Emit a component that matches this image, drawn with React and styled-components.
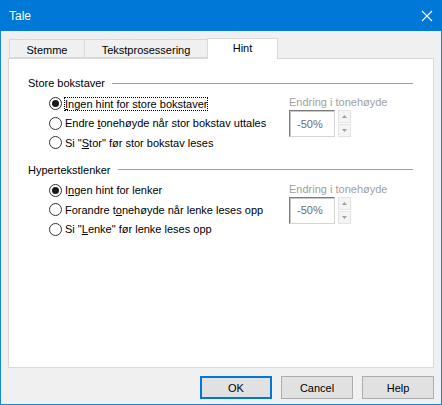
import React from "react";
import styled, { createGlobalStyle } from "styled-components";

const Global = createGlobalStyle`
  html, body {
    margin: 0;
    padding: 0;
    background: #ffffff;
  }
  body {
    font-family: "Liberation Sans", Arial, sans-serif;
    font-size: 11px;
    color: #000;
  }
`;

const Window = styled.div`
  width: 442px;
  height: 405px;
  box-sizing: border-box;
  display: flex;
  flex-direction: column;
  background: #f0f0f0;
  border: 1px solid #1883d7;
  border-top: none;
`;

const TitleBar = styled.div`
  height: 31px;
  margin: 0 -1px;
  background: #0078d7;
  color: #fff;
  display: flex;
  align-items: center;
  justify-content: space-between;
  padding: 0 8px 0 9px;
  font-size: 12px;
`;

const CloseBtn = styled.div`
  width: 14px;
  height: 14px;
  display: flex;
  align-items: center;
  justify-content: center;
`;

const Body = styled.div`
  flex: 1;
  display: flex;
  flex-direction: column;
  padding: 7px 7px 0 7px;
`;

const TabStrip = styled.div`
  display: flex;
  align-items: flex-end;
  height: 20px;
  padding-left: 1px;
`;

const Tab = styled.div`
  box-sizing: border-box;
  width: ${p => p.w}px;
  height: ${p => (p.active ? 21 : 19)}px;
  margin-bottom: ${p => (p.active ? -1 : 0)}px;
  margin-left: ${p => (p.active ? -1 : 0)}px;
  margin-right: ${p => (p.active ? -1 : 0)}px;
  background: ${p => (p.active ? "#ffffff" : "#f0f0f0")};
  border: 1px solid #d9d9d9;
  border-bottom: ${p => (p.active ? "none" : "1px solid #d9d9d9")};
  border-left: ${p => (p.first || p.active ? "1px solid #d9d9d9" : "none")};
  display: flex;
  justify-content: center;
  padding-top: ${p => (p.active ? 3 : 4)}px;
  position: relative;
  z-index: ${p => (p.active ? 2 : 1)};
`;

const Panel = styled.div`
  box-sizing: border-box;
  height: 310px;
  background: #fff;
  border: 1px solid #d9d9d9;
  padding: 16px 20px 0 19px;
  display: flex;
  flex-direction: column;
  gap: 9px;
`;

const Group = styled.div`
  display: flex;
  flex-direction: column;
`;

const Legend = styled.div`
  display: flex;
  align-items: center;
  gap: 7px;
  height: 16px;
  &::after {
    content: "";
    flex: 1;
    height: 1px;
    background: #a0a0a0;
  }
`;

const GroupBody = styled.div`
  display: flex;
  padding-left: 21px;
  padding-top: 3px;
`;

const Options = styled.div`
  width: 240px;
  display: flex;
  flex-direction: column;
`;

const OptionRow = styled.label`
  display: flex;
  align-items: center;
  height: 19.5px;
  white-space: nowrap;
`;

const RadioCircle = styled.span`
  box-sizing: border-box;
  width: 13px;
  height: 13px;
  border-radius: 50%;
  border: 1px solid #333;
  background: #fff;
  margin-right: 2px;
  display: flex;
  align-items: center;
  justify-content: center;
  &::after {
    content: "";
    width: 7px;
    height: 7px;
    border-radius: 50%;
    background: #1a1a1a;
    display: ${p => (p.checked ? "block" : "none")};
  }
`;

const OptionText = styled.span`
  padding: 1px 1px;
  outline: ${p => (p.focus ? "1px dotted #000" : "none")};
  outline-offset: -1px;
`;

const Key = styled.span`
  text-decoration: underline;
`;

const PitchBox = styled.div`
  display: flex;
  flex-direction: column;
  padding-top: 1px;
`;

const PitchLabel = styled.div`
  color: #a0a0a0;
  height: 14px;
  line-height: 14px;
`;

const SpinRow = styled.div`
  display: flex;
  margin-top: 1px;
`;

const SpinField = styled.div`
  box-sizing: border-box;
  width: 46px;
  height: 27px;
  border: 1px solid #d4d4d4;
  border-top-color: #7a7a7a;
  border-left-color: #7a7a7a;
  box-shadow: inset 1px 1px 0 #c8c8c8;
  color: #6d6d6d;
  display: flex;
  align-items: center;
  padding-left: 7px;
`;

const SpinButtons = styled.div`
  display: flex;
  flex-direction: column;
  margin-left: 3px;
  gap: 1px;
`;

const SpinBtn = styled.div`
  width: 13px;
  height: 13px;
  background: #f4f4f4;
  border: 1px solid #e3e3e3;
  box-sizing: border-box;
  display: flex;
  align-items: center;
  justify-content: center;
`;

const Footer = styled.div`
  display: flex;
  justify-content: flex-end;
  gap: 9px;
  padding-top: 8px;
`;

const Button = styled.button`
  box-sizing: border-box;
  width: 72px;
  height: 23px;
  font-family: "Liberation Sans", Arial, sans-serif;
  font-size: 11px;
  color: #000;
  background: #e1e1e1;
  border: ${p => (p.primary ? "2px solid #0078d7" : "1px solid #adadad")};
  padding: 0;
`;

const Arrow = ({ up }) => (
  <svg width="5" height="3" viewBox="0 0 5 3">
    <path d={up ? "M2.5 0 L5 3 L0 3 Z" : "M0 0 L5 0 L2.5 3 Z"} fill="#a0a0a0" />
  </svg>
);

const Spinner = () => (
  <PitchBox>
    <PitchLabel>Endring i tonehøyde</PitchLabel>
    <SpinRow>
      <SpinField>-50%</SpinField>
      <SpinButtons>
        <SpinBtn><Arrow up /></SpinBtn>
        <SpinBtn><Arrow /></SpinBtn>
      </SpinButtons>
    </SpinRow>
  </PitchBox>
);

const Option = ({ checked, focus, children }) => (
  <OptionRow>
    <RadioCircle checked={checked} />
    <OptionText focus={focus}>{children}</OptionText>
  </OptionRow>
);

export default function App() {
  return (
    <>
      <Global />
      <Window>
        <TitleBar>
          <span>Tale</span>
          <CloseBtn>
            <svg width="12" height="12" viewBox="0 0 12 12">
              <path d="M1 1 L11 11 M11 1 L1 11" stroke="#fff" strokeWidth="1.1" />
            </svg>
          </CloseBtn>
        </TitleBar>
        <Body>
          <TabStrip>
            <Tab w={76} first>Stemme</Tab>
            <Tab w={123}>Tekstprosessering</Tab>
            <Tab w={71} active>Hint</Tab>
          </TabStrip>
          <Panel>
            <Group>
              <Legend>Store bokstaver</Legend>
              <GroupBody>
                <Options>
                  <Option checked focus><Key>I</Key>ngen hint for store bokstaver</Option>
                  <Option>Endre <Key>t</Key>onehøyde når stor bokstav uttales</Option>
                  <Option>Si "<Key>S</Key>tor" før stor bokstav leses</Option>
                </Options>
                <Spinner />
              </GroupBody>
            </Group>
            <Group>
              <Legend>Hypertekstlenker</Legend>
              <GroupBody>
                <Options>
                  <Option checked>I<Key>n</Key>gen hint for lenker</Option>
                  <Option>Forandre t<Key>o</Key>nehøyde når lenke leses opp</Option>
                  <Option>Si "<Key>L</Key>enke" før lenke leses opp</Option>
                </Options>
                <Spinner />
              </GroupBody>
            </Group>
          </Panel>
          <Footer>
            <Button primary>OK</Button>
            <Button>Cancel</Button>
            <Button>Help</Button>
          </Footer>
        </Body>
      </Window>
    </>
  );
}
